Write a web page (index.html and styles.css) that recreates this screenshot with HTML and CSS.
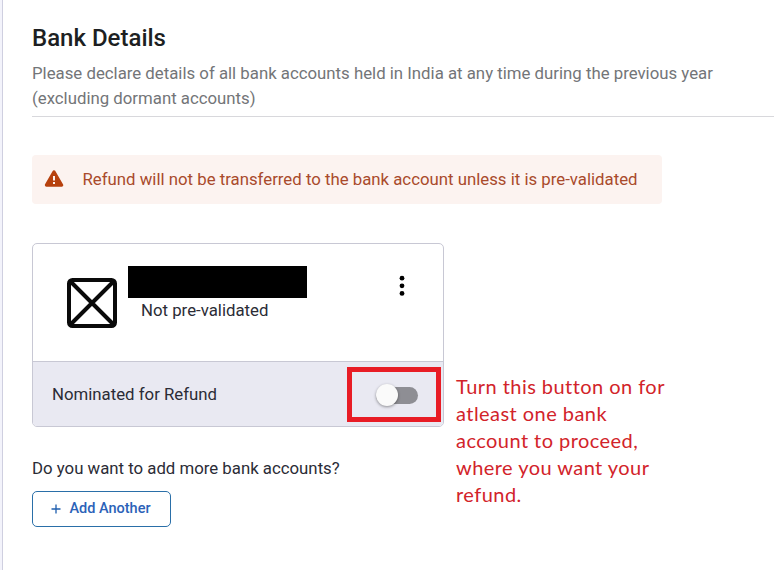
FILE: index.html
```html
<!DOCTYPE html>
<html lang="en">
  <head>
    <meta charset="UTF-8" />
    <meta name="viewport" content="width=device-width, initial-scale=1.0" />
    <title>Bank Details</title>
    <link rel="stylesheet" href="styles.css">
  </head>
  <body>
    <main class="panel">
      <header class="intro">
        <h1>Bank Details</h1>
        <p>Please declare details of all bank accounts held in India at any time during the previous year<br />(excluding dormant accounts)</p>
      </header>

      <div class="alert">
        <svg class="alert-icon" width="20" height="18" viewBox="0 0 20 18">
          <path d="M10 2 L17.5 15 H2.5 Z" fill="#b7410e" stroke="#b7410e" stroke-width="3.4" stroke-linejoin="round" />
          <path d="M10 6 V10.5 M10 12 V14" stroke="#fcf3f0" stroke-width="2" />
        </svg>
        <span>Refund will not be transferred to the bank account unless it is pre-validated</span>
      </div>

      <div class="row">
        <section class="card">
          <div class="card-body">
            <svg class="bank-logo" width="52" height="52" viewBox="0 0 52 52">
              <rect x="3" y="3" width="46" height="46" rx="3.5" fill="none" stroke="#0a0a0a" stroke-width="4" />
              <path d="M4 4 L48 48 M48 4 L4 48" stroke="#0a0a0a" stroke-width="4" />
            </svg>
            <div class="account">
              <div class="redacted"></div>
              <p class="status">Not pre-validated</p>
            </div>
            <button class="menu" aria-label="More options">
              <svg width="6" height="22" viewBox="0 0 6 22">
                <circle cx="3" cy="3.2" r="2.4" />
                <circle cx="3" cy="10.8" r="2.4" />
                <circle cx="3" cy="18.4" r="2.4" />
              </svg>
            </button>
          </div>
          <div class="card-footer">
            <span>Nominated for Refund</span>
            <div class="highlight">
              <div class="toggle"><div class="thumb"></div></div>
            </div>
          </div>
        </section>
        <p class="note">Turn this button on for<br />atleast one bank<br />account to proceed,<br />where you want your<br />refund.</p>
      </div>

      <p class="question">Do you want to add more bank accounts?</p>
      <button class="add">
        <svg width="10" height="10" viewBox="0 0 10 10">
          <path d="M5 0.5 V9.5 M0.5 5 H9.5" stroke="#1f5fae" stroke-width="1.3" />
        </svg>
        <span>Add Another</span>
      </button>
    </main>
  </body>
</html>
```
FILE: styles.css
```css
* {
  margin: 0;
  padding: 0;
  box-sizing: border-box;
}
body {
  height: 570px;
  overflow: hidden;
  padding-left: 2px;
  background: #f3f3fb;
  font-family: Roboto, sans-serif;
  font-size: 16.8px;
  color: #2b2c36;
}
.panel {
  height: 570px;
  padding: 22px 0 0 29px;
  background: #fff;
  border-left: 1px solid #cfcfe0;
}
.intro {
  height: 95px;
  border-bottom: 1px solid #d8d8dc;
}
h1 {
  font-size: 24px;
  font-weight: 500;
  line-height: 32px;
  color: #1d1f22;
}
.intro p {
  margin-top: 7px;
  line-height: 25px;
  color: #737578;
  white-space: nowrap;
}
.alert {
  display: flex;
  align-items: center;
  width: 630px;
  height: 49px;
  margin-top: 38px;
  padding: 0 0 1px 12px;
  background: #fcf3f0;
  border-radius: 4px;
  color: #a94a2b;
  white-space: nowrap;
}
.alert-icon {
  margin-right: 18.5px;
}
.row {
  display: flex;
  margin-top: 39px;
}
.card {
  width: 412px;
  height: 184px;
  border: 1px solid #c8c8d4;
  border-radius: 5px;
  overflow: hidden;
}
.card-body {
  display: flex;
  align-items: flex-start;
  height: 117px;
  padding: 22px 38px 0 33px;
}
.bank-logo {
  margin-top: 11px;
}
.account {
  flex: 1;
  padding-left: 10px;
}
.redacted {
  width: 179px;
  height: 32px;
  background: #000;
}
.status {
  padding-left: 13px;
  line-height: 25px;
}
.menu {
  margin-top: 9px;
  background: none;
  border: none;
}
.menu svg {
  display: block;
}
.card-footer {
  display: flex;
  align-items: center;
  justify-content: space-between;
  height: 65px;
  padding: 0 2px 0 19px;
  background: #e9e9f2;
  border-top: 1px solid #c8c8d4;
}
.highlight {
  display: flex;
  align-items: center;
  width: 94px;
  height: 55px;
  padding: 2px 0 0 24px;
  border: 5px solid #e81c25;
}
.toggle {
  width: 42px;
  height: 17px;
  background: #8e8e94;
  border-radius: 9px;
}
.thumb {
  width: 22px;
  height: 22px;
  margin: -2.5px 0 0 -0.5px;
  background: #fafafa;
  border-radius: 50%;
  box-shadow: 0 1px 3px rgba(0, 0, 0, 0.4);
}
.note {
  margin: 130px 0 -80px 12px;
  font-family: Lato, sans-serif;
  font-size: 20px;
  line-height: 27px;
  letter-spacing: 0.45px;
  color: #d2232a;
  white-space: nowrap;
}
.question {
  margin-top: 28px;
  line-height: 24px;
}
.add {
  display: flex;
  align-items: center;
  justify-content: center;
  width: 139px;
  height: 36px;
  margin-top: 11px;
  padding: 0 1px 2px 0;
  background: #fff;
  border: 1px solid #2a6fa8;
  border-radius: 5px;
  font-family: Roboto, sans-serif;
  font-size: 14.5px;
  font-weight: 500;
  color: #2b62b8;
}
.add svg {
  margin: 1px 8px 0 0;
}
```
